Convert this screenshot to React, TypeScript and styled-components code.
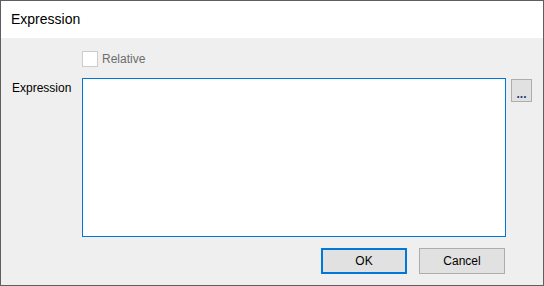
import React from 'react';
import styled, { createGlobalStyle } from 'styled-components';

const GlobalStyle = createGlobalStyle`
  html, body {
    margin: 0;
    padding: 0;
    background: #f0f0f0;
  }
  body {
    font-family: "Segoe UI", "Liberation Sans", Arial, sans-serif;
  }
`;

const Window = styled.div`
  width: 544px;
  height: 286px;
  box-sizing: border-box;
  border: 1px solid #5f5f5f;
  background: #efefef;
  display: flex;
  flex-direction: column;
  color: #000;
`;

const TitleBar = styled.div`
  height: 36px;
  background: #fff;
  display: flex;
  align-items: center;
  padding-left: 10px;
  font-size: 14px;
  padding-bottom: 1px;
`;

const Body = styled.div`
  padding: 13px 11px 0 11px;
  display: flex;
  flex-direction: column;
  font-size: 12px;
`;

const CheckRow = styled.label`
  margin-left: 70px;
  height: 16px;
  display: flex;
  align-items: center;
  gap: 4px;
  color: #6d6d6d;
`;

const CheckBox = styled.span`
  width: 14px;
  height: 14px;
  border: 1px solid #cccccc;
  background: #fff;
`;

const EditorRow = styled.div`
  margin-top: 11px;
  display: flex;
  align-items: flex-start;
`;

const FieldLabel = styled.div`
  width: 70px;
  padding-top: 2px;
  line-height: 16px;
`;

const TextArea = styled.div`
  width: 425px;
  height: 159px;
  box-sizing: border-box;
  border: 1px solid #0078d7;
  background: #fff;
`;

const BrowseButton = styled.button`
  margin-left: 5px;
  margin-top: 1px;
  width: 21px;
  height: 23px;
  box-sizing: border-box;
  border: 1px solid #adadad;
  background: #e1e1e1;
  font: inherit;
  font-weight: bold;
  color: #1b3d6e;
  padding: 6px 0 0;
  line-height: 12px;
  letter-spacing: 0;
`;

const ButtonRow = styled.div`
  margin-top: 11px;
  display: flex;
  justify-content: flex-end;
  gap: 12px;
  padding-right: 27px;
`;

const DialogButton = styled.button<{ $default?: boolean }>`
  width: 86px;
  height: 26px;
  box-sizing: border-box;
  background: #e1e1e1;
  border: ${(p) => (p.$default ? '2px solid #0078d7' : '1px solid #adadad')};
  font: inherit;
  color: #000;
  padding: 0;
`;

export default function App() {
  return (
    <>
      <GlobalStyle />
      <Window>
        <TitleBar>Expression</TitleBar>
        <Body>
          <CheckRow>
            <CheckBox />
            Relative
          </CheckRow>
          <EditorRow>
            <FieldLabel>Expression</FieldLabel>
            <TextArea />
            <BrowseButton>...</BrowseButton>
          </EditorRow>
          <ButtonRow>
            <DialogButton $default>OK</DialogButton>
            <DialogButton>Cancel</DialogButton>
          </ButtonRow>
        </Body>
      </Window>
    </>
  );
}
